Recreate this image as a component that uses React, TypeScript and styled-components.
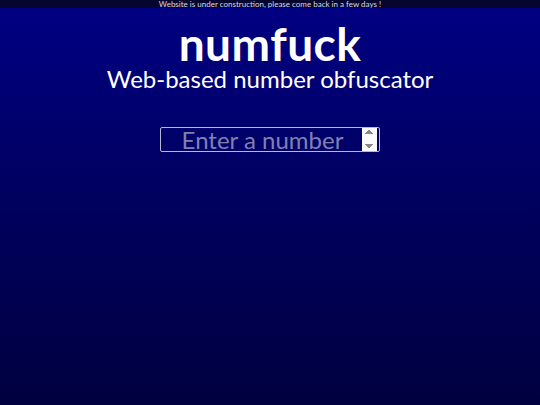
import React from 'react'
import styled, { createGlobalStyle } from 'styled-components'

const GlobalStyle = createGlobalStyle`
  html, body {
    margin: 0;
    height: 100%;
  }
  body {
    font-family: 'Lato', 'Noto Sans', sans-serif;
    background: linear-gradient(to bottom, #000084 0%, #00005e 50%, #000040 100%);
    background-attachment: fixed;
    min-height: 100vh;
    color: #fff;
  }
`

const Banner = styled.div`
  height: 8px;
  background: #05052e;
  color: #d8d8e8;
  font-size: 8px;
  line-height: 8px;
  text-align: center;
  white-space: nowrap;
`

const Main = styled.main`
  display: flex;
  flex-direction: column;
  align-items: center;
  padding-top: 13px;
`

const Title = styled.h1`
  margin: 0;
  font-size: 46px;
  font-weight: 700;
  line-height: 46px;
  letter-spacing: 0.5px;
`

const Subtitle = styled.h2`
  margin: 0;
  font-size: 24px;
  font-weight: 400;
  line-height: 24px;
`

const NumberInput = styled.input`
  margin-top: 36px;
  width: 220px;
  height: 25px;
  box-sizing: border-box;
  background: transparent;
  border: 1px solid #b8b8d0;
  border-radius: 2px;
  color: #fff;
  font-family: inherit;
  font-size: 24px;
  text-align: center;
  padding: 0 2px;
  outline: none;

  &::placeholder {
    color: #8080b0;
  }
`

const App: React.FC = () => (
  <>
    <GlobalStyle />
    <Banner>Website is under construction, please come back in a few days !</Banner>
    <Main>
      <Title>numfuck</Title>
      <Subtitle>Web-based number obfuscator</Subtitle>
      <NumberInput type="number" placeholder="Enter a number" autoFocus />
    </Main>
  </>
)

export default App
